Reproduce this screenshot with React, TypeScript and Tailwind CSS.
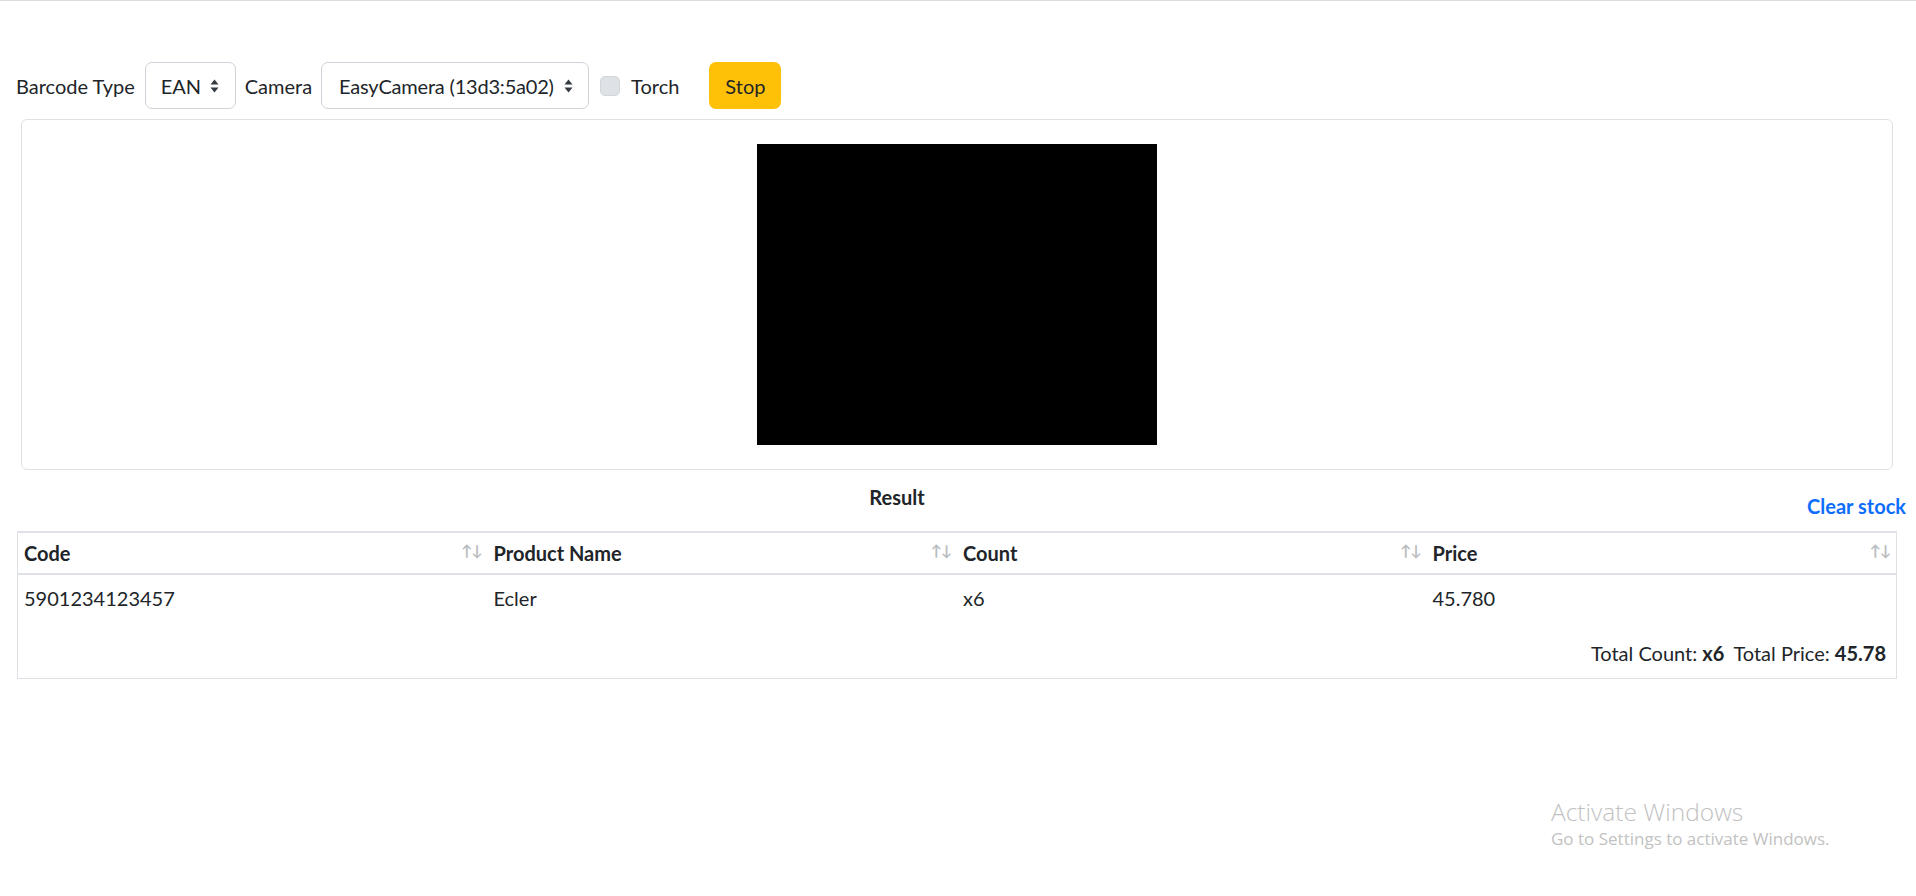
import React from "react";

const Caret = () => (
  <svg width="9" height="14" viewBox="0 0 9 14" className="shrink-0">
    <path d="M4.5 0.5 L8.5 5.5 H0.5 Z M0.5 8.5 H8.5 L4.5 13.5 Z" fill="#343a40" />
  </svg>
);

const SortIcon = () => (
  <span className="text-[15px] leading-none text-[#b8bcc0] tracking-[-1px] mt-[-6px]">↑↓</span>
);

const columns = ["Code", "Product Name", "Count", "Price"];

const rows = [{ code: "5901234123457", name: "Ecler", count: "x6", price: "45.780" }];

const App = () => {
  return (
    <div className="relative min-h-screen bg-white border-t border-[#d9dbde] font-['Lato',sans-serif] text-[20px] text-[#212529]">
      {/* toolbar */}
      <div className="flex items-center h-[47px] mt-[61px] pl-[16px]">
        <span>Barcode Type</span>
        <div className="ml-[10px] flex items-center justify-between h-[47px] w-[91px] pl-[15px] pr-[16px] border border-[#ced4da] rounded-[7px]">
          <span>EAN</span>
          <Caret />
        </div>
        <span className="ml-[9px]">Camera</span>
        <div className="ml-[9px] flex items-center justify-between h-[47px] w-[268px] pl-[17px] pr-[15px] border border-[#ced4da] rounded-[7px]">
          <span className="tracking-[-0.2px]">EasyCamera (13d3:5a02)</span>
          <Caret />
        </div>
        <span className="ml-[11px] w-[20px] h-[20px] rounded-[5px] bg-[#dee2e6] border border-[#d3d7db]" />
        <span className="ml-[11px]">Torch</span>
        <button className="ml-[30px] h-[47px] w-[72px] rounded-[7px] bg-[#ffc107] text-[#212529]">Stop</button>
      </div>

      {/* video card */}
      <div className="mt-[10px] ml-[21px] w-[1872px] h-[351px] border border-[#dee2e6] rounded-[6px] flex justify-center pt-[24px]">
        <div className="w-[400px] h-[301px] bg-black" />
      </div>

      {/* result header */}
      <div className="flex items-start mt-[15px] pr-[10px]">
        <div className="flex-1 text-center font-bold pr-[13px] leading-[24px]">Result</div>
        <button className="mt-[9px] font-bold text-[#0d6efd] leading-[24px]">Clear stock</button>
      </div>

      {/* table */}
      <div className="ml-[17px] mt-[13px] w-[1880px] border border-[#dee2e6] border-t-2">
        <div className="grid grid-cols-4 h-[42px] border-b-2 border-[#dee2e6]">
          {columns.map((c) => (
            <div key={c} className="flex items-center justify-between pl-[6px] pr-[6px] font-bold">
              <span>{c}</span>
              <SortIcon />
            </div>
          ))}
        </div>
        {rows.map((r) => (
          <div key={r.code} className="grid grid-cols-4 h-[46px] items-center">
            <div className="pl-[6px]">{r.code}</div>
            <div className="pl-[6px]">{r.name}</div>
            <div className="pl-[6px]">{r.count}</div>
            <div className="pl-[6px]">{r.price}</div>
          </div>
        ))}
        <div className="flex justify-end items-center h-[57px] pr-[10px] pt-[7px]">
          <span>
            Total Count: <b>x6</b>
          </span>
          <span className="ml-[9px]">
            Total Price: <b>45.78</b>
          </span>
        </div>
      </div>

      {/* windows watermark */}
      <div className="absolute left-[1551px] top-[795px] text-[#c2c2c2] font-['Open_Sans',sans-serif] pointer-events-none">
        <div className="text-[24.5px] font-light leading-[32px]">Activate Windows</div>
        <div className="text-[17px] leading-[24px] mt-[-1px]">Go to Settings to activate Windows.</div>
      </div>
    </div>
  );
};

export default App;
